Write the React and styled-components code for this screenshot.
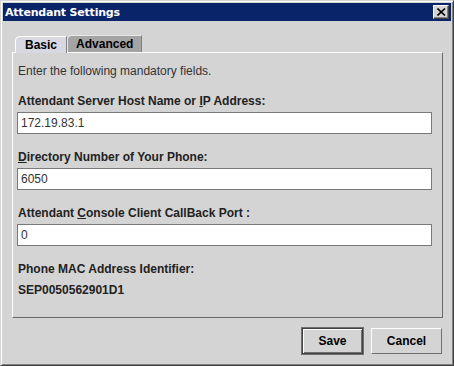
import styled, { createGlobalStyle } from 'styled-components';

const GlobalStyle = createGlobalStyle`
  html, body {
    margin: 0;
    padding: 0;
    background: #d4d4d4;
  }
  body {
    font-family: "Liberation Sans", Arial, sans-serif;
  }
`;

const fields = [
  { before: 'Attendant Server Host Name or ', key: 'I', after: 'P Address:', value: '172.19.83.1' },
  { before: '', key: 'D', after: 'irectory Number of Your Phone:', value: '6050' },
  { before: 'Attendant ', key: 'C', after: 'onsole Client CallBack Port :', value: '0' },
];

const App = () => {
  return (
    <>
      <GlobalStyle />
      <Window>
        <TitleBar>
          <Title>Attendant Settings</Title>
          <CloseButton>
            <svg width="9" height="8" viewBox="0 0 9 8">
              <path d="M0.5 0.5 L8 7.5 M8 0.5 L0.5 7.5" stroke="#000" strokeWidth="1.6" />
            </svg>
          </CloseButton>
        </TitleBar>
        <Body>
          <Tabs>
            <Tab $active>Basic</Tab>
            <Tab>Advanced</Tab>
          </Tabs>
          <Panel>
            <Intro>Enter the following mandatory fields.</Intro>
            {fields.map((f) => (
              <Field key={f.value}>
                <Label>
                  {f.before}
                  <u>{f.key}</u>
                  {f.after}
                </Label>
                <Input defaultValue={f.value} />
              </Field>
            ))}
            <Label>Phone MAC Address Identifier:</Label>
            <MacValue>SEP0050562901D1</MacValue>
          </Panel>
          <Buttons>
            <Button $default $width={61}>Save</Button>
            <Button $width={71}>Cancel</Button>
          </Buttons>
        </Body>
      </Window>
    </>
  );
};

const Window = styled.div`
  width: 454px;
  height: 366px;
  box-sizing: border-box;
  background: #d4d4d4;
  border: 1px solid;
  border-color: #d4d4d4 #404040 #404040 #d4d4d4;
  box-shadow: inset 1px 1px #ffffff, inset -1px -1px #808080;
  padding: 2px;
  display: flex;
  flex-direction: column;
`;

const TitleBar = styled.div`
  height: 18px;
  background: #0a246a;
  display: flex;
  align-items: center;
  justify-content: space-between;
  padding: 0 2px 0 2px;
`;

const Title = styled.div`
  color: #ffffff;
  font-family: "DejaVu Sans", Verdana, sans-serif;
  font-weight: bold;
  font-size: 11px;
  letter-spacing: -0.2px;
`;

const CloseButton = styled.div`
  width: 16px;
  height: 14px;
  box-sizing: border-box;
  background: #d4d4d4;
  border: 1px solid;
  border-color: #ffffff #404040 #404040 #ffffff;
  box-shadow: inset -1px -1px #808080;
  display: flex;
  align-items: center;
  justify-content: center;
`;

const Body = styled.div`
  flex: 1;
  padding: 13px 8px 0 9px;
  display: flex;
  flex-direction: column;
`;

const Tabs = styled.div`
  display: flex;
  padding-left: 3px;
  height: 18px;
  align-items: flex-end;
`;

const Tab = styled.div`
  height: 17px;
  box-sizing: border-box;
  padding: 0 ${(p) => (p.$active ? '9px' : '8px')};
  font-size: 12px;
  font-weight: bold;
  color: #000;
  display: flex;
  align-items: center;
  background: ${(p) => (p.$active ? '#d8d8e2' : '#a4a4a4')};
  border-top: 1px solid ${(p) => (p.$active ? '#ffffff' : '#e8e8e8')};
  border-left: 1px solid ${(p) => (p.$active ? '#ffffff' : '#e8e8e8')};
  border-right: 1px solid #808080;
  border-top-left-radius: 5px;
  margin-bottom: ${(p) => (p.$active ? '-1px' : '0')};
  position: relative;
`;

const Panel = styled.div`
  height: 266px;
  box-sizing: border-box;
  border: 1px solid;
  border-color: #ffffff #6a6a6a #6a6a6a #ffffff;
  padding: 11px 10px 0 5px;
  display: flex;
  flex-direction: column;
`;

const Intro = styled.div`
  font-size: 12px;
  color: #333333;
  margin-bottom: 16px;
`;

const Field = styled.div`
  display: flex;
  flex-direction: column;
  margin-bottom: 16px;
`;

const Label = styled.div`
  font-size: 12px;
  font-weight: bold;
  color: #222222;
  margin-bottom: 4px;
  line-height: 14px;
`;

const Input = styled.input`
  width: 415px;
  height: 22px;
  box-sizing: border-box;
  margin: 0 0 0 -1px;
  border: 1px solid #7a7a7a;
  background: #ffffff;
  font-family: "Liberation Sans", Arial, sans-serif;
  font-size: 12px;
  color: #333333;
  padding: 0 3px;
  outline: none;
`;

const MacValue = styled.div`
  font-size: 12px;
  font-weight: bold;
  color: #222222;
  margin-top: 3px;
`;

const Buttons = styled.div`
  display: flex;
  justify-content: flex-end;
  gap: 8px;
  padding: 10px 1px 0 0;
`;

const Button = styled.button`
  width: ${(p) => p.$width}px;
  height: 26px;
  box-sizing: border-box;
  background: #d4d4d4;
  font-family: "Liberation Sans", Arial, sans-serif;
  font-weight: bold;
  font-size: 12px;
  color: #000;
  padding: 0;
  border: 1px solid;
  border-color: ${(p) => (p.$default ? '#404040' : '#ffffff #707070 #707070 #ffffff')};
  box-shadow: ${(p) => (p.$default ? 'inset 1px 1px #ffffff, inset -1px -1px #707070' : 'none')};
  outline: ${(p) => (p.$default ? '1px solid #707070' : 'none')};
`;

export default App;
